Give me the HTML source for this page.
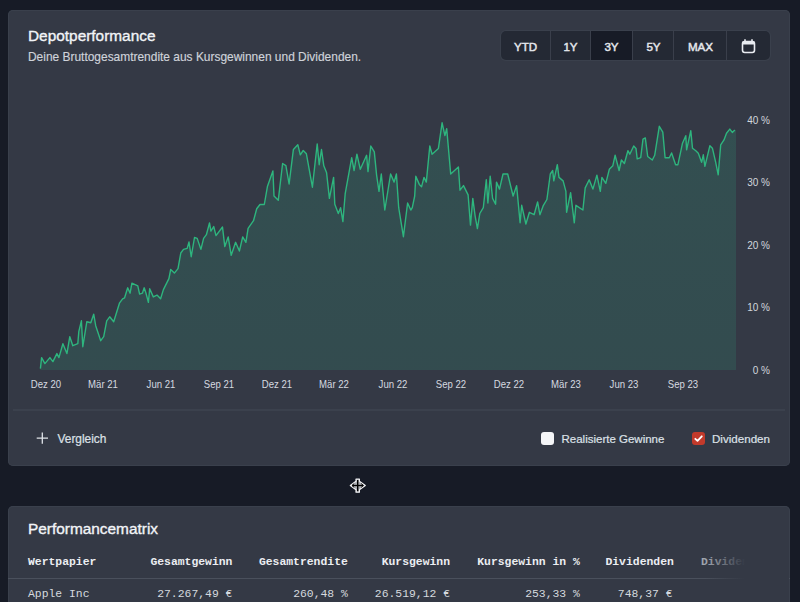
<!DOCTYPE html>
<html><head><meta charset="utf-8">
<style>
*{margin:0;padding:0;box-sizing:border-box}
html,body{width:800px;height:602px;overflow:hidden;background:#171b26;font-family:"Liberation Sans",sans-serif;color:#e6e9ee}
.card{position:absolute;background:#343945;border-radius:5px;box-shadow:inset 0 0 0 1px #3a404c}
#c1{left:8px;top:10px;width:782px;height:456px}
#c2{left:8px;top:506px;width:782px;height:120px}
.abs{position:absolute;white-space:nowrap}
.t1{left:28px;top:27px;font-size:15.4px;color:#f2f4f7;-webkit-text-stroke:0.35px #f2f4f7}
.sub{left:28px;top:50px;font-size:11.95px;color:#cfd3da;-webkit-text-stroke:0.15px #cfd3da}
.grp{position:absolute;left:501px;top:31px;width:269px;height:29px;background:#242934;border-radius:5px;overflow:hidden;box-shadow:0 0 0 1px #3a404c}
.btn{position:absolute;top:0;height:29px;font-weight:400;font-size:11.6px;color:#e4e7ec;text-align:center;line-height:31px;-webkit-text-stroke:0.45px #e4e7ec}
.sep{position:absolute;top:0;width:1px;height:29px;background:#3a3f4b}
.xl{position:absolute;top:378.5px;font-size:10.3px;color:#d6dae0;width:60px;text-align:center;margin-left:-30px;transform:scaleX(0.93)}
.yl{position:absolute;left:740px;width:30px;text-align:right;font-size:10px;color:#d2d6dc;margin-top:2px}
.div{position:absolute;left:13px;top:409px;width:772px;height:2px;background:#3b414d}
.ft{font-size:11.7px;color:#dde1e7;-webkit-text-stroke:0.2px #dde1e7}
.mono{font-family:"Liberation Mono",monospace;font-size:11.4px}
.th{position:absolute;top:556px;font-weight:700;color:#eceef2;text-align:right}
.td{position:absolute;top:587.5px;color:#d5d9df;text-align:right}
</style></head><body>
<div class="card" id="c1"></div>
<div class="card" id="c2"></div>

<div class="abs t1">Depotperformance</div>
<div class="abs sub">Deine Bruttogesamtrendite aus Kursgewinnen und Dividenden.</div>

<div class="grp">
  <div class="btn" style="left:0;width:49px">YTD</div>
  <div class="sep" style="left:49px"></div>
  <div class="btn" style="left:50px;width:39px">1Y</div>
  <div class="sep" style="left:89px"></div>
  <div class="btn" style="left:90px;width:41px;background:#171b26">3Y</div>
  <div class="sep" style="left:131px"></div>
  <div class="btn" style="left:132px;width:41px">5Y</div>
  <div class="sep" style="left:172px"></div>
  <div class="btn" style="left:173px;width:53px">MAX</div>
  <div class="sep" style="left:225px"></div>
  <div class="btn" style="left:226px;width:43px"></div>
</div>
<svg class="abs" style="left:0;top:0" width="800" height="602" viewBox="0 0 800 602">
  <defs>
    <linearGradient id="fg" x1="0" y1="120" x2="0" y2="369" gradientUnits="userSpaceOnUse">
      <stop offset="0" stop-color="#2dbe8c" stop-opacity="0.165"/>
      <stop offset="1" stop-color="#2dbe8c" stop-opacity="0.14"/>
    </linearGradient>
  </defs>
  <path d="M40.4 368.6 L41.6 357.6 L44.9 363.6 L49.9 357.6 L52.9 361.6 L56.9 353.6 L58.9 357.6 L62.9 343.7 L66.9 353.6 L69.8 336.7 L72.8 345.7 L77.8 343.7 L78.8 331.7 L81.4 320.8 L82.8 346.7 L86.8 321.8 L90.8 322.7 L93.7 314.2 L95.7 325.7 L100.7 340.7 L103.7 336.7 L106.7 320.8 L109.7 316.8 L113.7 321.8 L119.6 302.8 L122.6 298.8 L124.6 297.8 L127.7 287.8 L130.1 293.2 L131.9 283.2 L137.8 285.9 L139.6 294.1 L142.4 293.2 L144.2 287.8 L146 293.2 L148.4 302.4 L149.7 288.7 L153.3 296.9 L157 295.1 L160.6 298.7 L163.4 289.6 L168.9 278.6 L170.7 269.5 L174.4 273.1 L178 268.6 L180.8 253 L183.5 249.4 L187.2 248.4 L189 242 L191.2 256.7 L194.5 237.5 L197.2 238.4 L200.9 249.4 L203.6 238.4 L206.4 234.7 L209.5 222.9 L210.9 231.1 L213.7 226.5 L216 235.6 L222.5 227 L224.8 246.6 L228.2 236.9 L231.2 255.3 L235.6 242.3 L239.4 251 L242.7 236.9 L245.9 242.3 L248.1 228.3 L253.5 220.7 L256.7 208.8 L260 204.5 L264.3 204.5 L267.5 186.2 L272.9 171 L274 195.9 L278.3 200.2 L282.6 163.5 L285.9 165.6 L289.1 184 L293.4 149.4 L297.8 144.7 L300.3 154.8 L303.2 150.5 L306.4 153.8 L312.4 187.2 L317.2 144 L319.2 164.7 L321.5 149.5 L323.8 165.8 L326.6 172.8 L329.4 198.4 L333.6 177.4 L334.8 204.2 L338.3 213.5 L340.6 207.7 L342.9 221.6 L345.2 193.7 L351.7 157.7 L354.1 170.5 L356.9 154.2 L360.3 169.3 L366.6 155.3 L368 171.6 L370.8 146 L374.3 151.9 L376.6 175.1 L379 191.4 L381.3 174 L384.8 210 L390.6 174 L394.1 182.1 L396.4 174 L398.7 207.7 L403.4 236.7 L407.6 203 L410.8 210 L412.3 207.7 L414.7 196 L415.8 176.3 L419.3 184.4 L421.6 186.7 L424 177.4 L426.3 182.1 L429.8 146 L432.1 154.2 L438.4 148.4 L442.1 122.8 L444.9 135.6 L446.7 128.6 L450.7 174 L458.4 167 L460 190.2 L463.5 185.6 L468.1 194.9 L470.5 225.1 L472.8 198.4 L475.1 215.8 L477.4 228.6 L479.8 213.5 L483.3 207.7 L486.3 179.8 L487.9 203 L490.2 176.3 L492.6 198.4 L495.6 204.2 L496.5 182.1 L499.5 189.1 L503 174 L507.7 174 L513.1 196 L516.6 185.6 L520.1 222.8 L521.7 205.3 L525.9 224 L529.4 212.3 L534.1 214.7 L537.6 201.9 L539.9 214.7 L543.4 205.3 L546.9 199.5 L550.3 174 L552.7 170.5 L553.8 180.9 L557.3 164.7 L559 177.4 L563.1 180.9 L565.9 191.4 L566.6 212.3 L570.6 192.6 L574.3 222.8 L575.9 205.3 L582.9 210 L585.2 187.9 L589.2 179.8 L592.9 189.1 L596.9 175.1 L600.3 191.4 L601.9 177.4 L605.8 183.3 L609.3 169.3 L612.8 165.8 L615.1 155.3 L619.1 170.5 L621.4 160 L624.4 163.5 L627.9 150.7 L629.8 154.2 L633.7 146 L636 148.4 L637.2 158.8 L640.7 157.7 L643 139.1 L645.3 137.9 L647.7 156.5 L652.3 160 L654.7 155.3 L659.3 126.3 L662.8 132.1 L665.1 157.7 L669.3 157.7 L671.6 153 L675.6 164.7 L677.9 164.7 L681.4 148.4 L682.5 143.2 L685.8 135.7 L686.6 149.8 L690.8 130.7 L692.5 148.2 L695.8 150.7 L698.3 153.2 L701.6 162.3 L703.3 154.8 L704.9 166.4 L709.9 145.7 L712.4 148.2 L715.7 162.3 L718.2 174.8 L720.7 144.9 L724 139.9 L726.5 133.2 L729.8 129.1 L732.3 132.4 L734.8 129.9 L736 129.9 L736 370 L40.4 370 Z" fill="url(#fg)"/>
  <path d="M40.4 368.6 L41.6 357.6 L44.9 363.6 L49.9 357.6 L52.9 361.6 L56.9 353.6 L58.9 357.6 L62.9 343.7 L66.9 353.6 L69.8 336.7 L72.8 345.7 L77.8 343.7 L78.8 331.7 L81.4 320.8 L82.8 346.7 L86.8 321.8 L90.8 322.7 L93.7 314.2 L95.7 325.7 L100.7 340.7 L103.7 336.7 L106.7 320.8 L109.7 316.8 L113.7 321.8 L119.6 302.8 L122.6 298.8 L124.6 297.8 L127.7 287.8 L130.1 293.2 L131.9 283.2 L137.8 285.9 L139.6 294.1 L142.4 293.2 L144.2 287.8 L146 293.2 L148.4 302.4 L149.7 288.7 L153.3 296.9 L157 295.1 L160.6 298.7 L163.4 289.6 L168.9 278.6 L170.7 269.5 L174.4 273.1 L178 268.6 L180.8 253 L183.5 249.4 L187.2 248.4 L189 242 L191.2 256.7 L194.5 237.5 L197.2 238.4 L200.9 249.4 L203.6 238.4 L206.4 234.7 L209.5 222.9 L210.9 231.1 L213.7 226.5 L216 235.6 L222.5 227 L224.8 246.6 L228.2 236.9 L231.2 255.3 L235.6 242.3 L239.4 251 L242.7 236.9 L245.9 242.3 L248.1 228.3 L253.5 220.7 L256.7 208.8 L260 204.5 L264.3 204.5 L267.5 186.2 L272.9 171 L274 195.9 L278.3 200.2 L282.6 163.5 L285.9 165.6 L289.1 184 L293.4 149.4 L297.8 144.7 L300.3 154.8 L303.2 150.5 L306.4 153.8 L312.4 187.2 L317.2 144 L319.2 164.7 L321.5 149.5 L323.8 165.8 L326.6 172.8 L329.4 198.4 L333.6 177.4 L334.8 204.2 L338.3 213.5 L340.6 207.7 L342.9 221.6 L345.2 193.7 L351.7 157.7 L354.1 170.5 L356.9 154.2 L360.3 169.3 L366.6 155.3 L368 171.6 L370.8 146 L374.3 151.9 L376.6 175.1 L379 191.4 L381.3 174 L384.8 210 L390.6 174 L394.1 182.1 L396.4 174 L398.7 207.7 L403.4 236.7 L407.6 203 L410.8 210 L412.3 207.7 L414.7 196 L415.8 176.3 L419.3 184.4 L421.6 186.7 L424 177.4 L426.3 182.1 L429.8 146 L432.1 154.2 L438.4 148.4 L442.1 122.8 L444.9 135.6 L446.7 128.6 L450.7 174 L458.4 167 L460 190.2 L463.5 185.6 L468.1 194.9 L470.5 225.1 L472.8 198.4 L475.1 215.8 L477.4 228.6 L479.8 213.5 L483.3 207.7 L486.3 179.8 L487.9 203 L490.2 176.3 L492.6 198.4 L495.6 204.2 L496.5 182.1 L499.5 189.1 L503 174 L507.7 174 L513.1 196 L516.6 185.6 L520.1 222.8 L521.7 205.3 L525.9 224 L529.4 212.3 L534.1 214.7 L537.6 201.9 L539.9 214.7 L543.4 205.3 L546.9 199.5 L550.3 174 L552.7 170.5 L553.8 180.9 L557.3 164.7 L559 177.4 L563.1 180.9 L565.9 191.4 L566.6 212.3 L570.6 192.6 L574.3 222.8 L575.9 205.3 L582.9 210 L585.2 187.9 L589.2 179.8 L592.9 189.1 L596.9 175.1 L600.3 191.4 L601.9 177.4 L605.8 183.3 L609.3 169.3 L612.8 165.8 L615.1 155.3 L619.1 170.5 L621.4 160 L624.4 163.5 L627.9 150.7 L629.8 154.2 L633.7 146 L636 148.4 L637.2 158.8 L640.7 157.7 L643 139.1 L645.3 137.9 L647.7 156.5 L652.3 160 L654.7 155.3 L659.3 126.3 L662.8 132.1 L665.1 157.7 L669.3 157.7 L671.6 153 L675.6 164.7 L677.9 164.7 L681.4 148.4 L682.5 143.2 L685.8 135.7 L686.6 149.8 L690.8 130.7 L692.5 148.2 L695.8 150.7 L698.3 153.2 L701.6 162.3 L703.3 154.8 L704.9 166.4 L709.9 145.7 L712.4 148.2 L715.7 162.3 L718.2 174.8 L720.7 144.9 L724 139.9 L726.5 133.2 L729.8 129.1 L732.3 132.4 L734.8 129.9" fill="none" stroke="#2eb57e" stroke-width="1.4" stroke-linejoin="round"/>
  <!-- calendar icon -->
  <g fill="none" stroke="#e9ecf1" stroke-width="1.6">
    <rect x="742.5" y="41.5" width="12" height="11" rx="2.2"/>
    <path d="M745 39.2v2.6M752 39.2v2.6"/>
  </g>
  <rect x="742.5" y="41.5" width="12" height="3" fill="#e9ecf1"/>
  <!-- plus -->
  <path d="M42.3 432.5v11.3M36.7 438.2h11.3" stroke="#dfe3e8" stroke-width="1.3"/>
  <!-- move cursor -->
  <path d="M356 479 L359.4 479 L359.4 481.2 L365.3 485.5 L359.4 489.8 L359.4 492.2 L356 492.2 L356 489.8 L350.3 485.5 L356 481.2 Z" fill="#a9abb0" stroke="#f2f2f4" stroke-width="1.2" stroke-linejoin="round"/>
  <path d="M352.2 485.5 H363.2" stroke="#000" stroke-width="1.3"/>
  <path d="M354.2 483.6 L352 485.5 L354.2 487.4 M361.2 483.6 L363.4 485.5 L361.2 487.4" fill="none" stroke="#000" stroke-width="1"/>
  <path d="M357.7 480 V491.2" stroke="#000" stroke-width="1.4"/>
</svg>

<div class="xl" style="left:45.6px">Dez 20</div>
<div class="xl" style="left:102.5px">Mär 21</div>
<div class="xl" style="left:160.5px">Jun 21</div>
<div class="xl" style="left:218.9px">Sep 21</div>
<div class="xl" style="left:276.9px">Dez 21</div>
<div class="xl" style="left:334.2px">Mär 22</div>
<div class="xl" style="left:392.5px">Jun 22</div>
<div class="xl" style="left:450.8px">Sep 22</div>
<div class="xl" style="left:509.1px">Dez 22</div>
<div class="xl" style="left:565.9px">Mär 23</div>
<div class="xl" style="left:624.2px">Jun 23</div>
<div class="xl" style="left:682.5px">Sep 23</div>

<div class="yl" style="top:113px">40 %</div>
<div class="yl" style="top:175px">30 %</div>
<div class="yl" style="top:238px">20 %</div>
<div class="yl" style="top:300px">10 %</div>
<div class="yl" style="top:363px">0 %</div>

<div class="div"></div>
<div class="abs ft" style="left:57.5px;top:432px;font-size:11.9px">Vergleich</div>
<div class="abs" style="left:541px;top:432px;width:13px;height:13px;background:#f4f5f7;border-radius:3px"></div>
<div class="abs ft" style="left:561.5px;top:433px;font-size:11.5px">Realisierte Gewinne</div>
<div class="abs" style="left:692px;top:432px;width:13px;height:13px;background:#c23a2b;border-radius:3px"></div>
<svg class="abs" style="left:692px;top:432px" width="13" height="13" viewBox="0 0 13 13"><path d="M3.3 6.8 L5.5 8.9 L9.8 4.3" fill="none" stroke="#fff" stroke-width="1.8" stroke-linecap="round" stroke-linejoin="round"/></svg>
<div class="abs ft" style="left:712px;top:432px;font-size:11.6px">Dividenden</div>

<div class="abs t1" style="top:519.5px;font-size:15.4px">Performancematrix</div>
<div class="mono">
  <div class="th" style="left:28px;text-align:left">Wertpapier</div>
  <div class="th" style="right:567.6px">Gesamtgewinn</div>
  <div class="th" style="right:452.2px">Gesamtrendite</div>
  <div class="th" style="right:350px">Kursgewinn</div>
  <div class="th" style="right:220.2px">Kursgewinn in %</div>
  <div class="th" style="right:126.2px">Dividenden</div>
  <div class="th" style="left:701px;text-align:left;color:#a0a5ae">Dividenden</div>
  <div class="td" style="left:28px;text-align:left">Apple Inc</div>
  <div class="td" style="right:567.6px">27.267,49 €</div>
  <div class="td" style="right:452.2px">260,48 %</div>
  <div class="td" style="right:350px">26.519,12 €</div>
  <div class="td" style="right:220.2px">253,33 %</div>
  <div class="td" style="right:127.5px">748,37 €</div>
</div>
<div class="abs" style="left:8px;top:578px;width:782px;height:1px;background:#4a505c"></div>
<div class="abs" style="left:705px;top:540px;width:84px;height:62px;background:linear-gradient(90deg,rgba(52,57,69,0) 0px,rgba(52,57,69,0.55) 22px,#343945 40px)"></div>
</body></html>
